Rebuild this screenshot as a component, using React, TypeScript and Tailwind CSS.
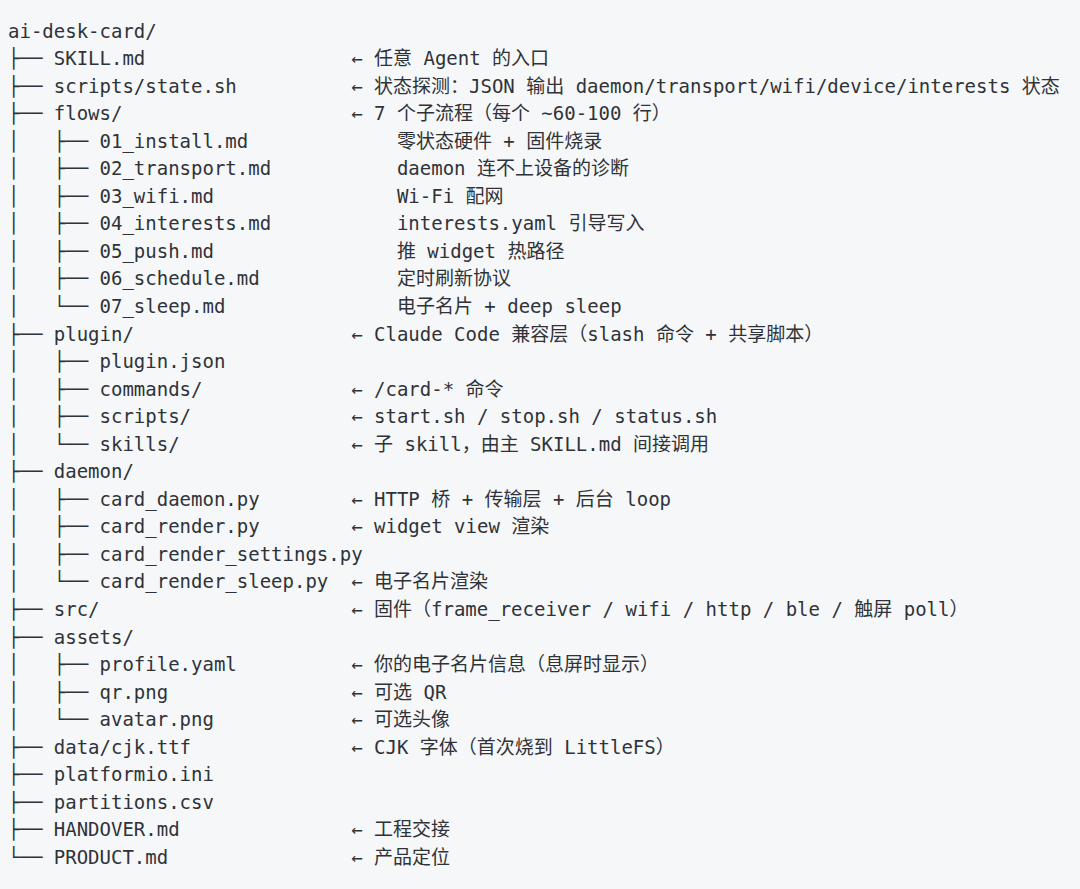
import React from 'react';

type Row = {
  path: string;
  note?: string;
  // arrow: "← note" after the path column, plain: indented note with no arrow
  kind?: 'arrow' | 'plain';
};

const rows: Row[] = [
  { path: 'ai-desk-card/' },
  { path: '├── SKILL.md', note: '任意 Agent 的入口', kind: 'arrow' },
  { path: '├── scripts/state.sh', note: '状态探测：JSON 输出 daemon/transport/wifi/device/interests 状态', kind: 'arrow' },
  { path: '├── flows/', note: '7 个子流程（每个 ~60-100 行）', kind: 'arrow' },
  { path: '│   ├── 01_install.md', note: '零状态硬件 + 固件烧录', kind: 'plain' },
  { path: '│   ├── 02_transport.md', note: 'daemon 连不上设备的诊断', kind: 'plain' },
  { path: '│   ├── 03_wifi.md', note: 'Wi-Fi 配网', kind: 'plain' },
  { path: '│   ├── 04_interests.md', note: 'interests.yaml 引导写入', kind: 'plain' },
  { path: '│   ├── 05_push.md', note: '推 widget 热路径', kind: 'plain' },
  { path: '│   ├── 06_schedule.md', note: '定时刷新协议', kind: 'plain' },
  { path: '│   └── 07_sleep.md', note: '电子名片 + deep sleep', kind: 'plain' },
  { path: '├── plugin/', note: 'Claude Code 兼容层（slash 命令 + 共享脚本）', kind: 'arrow' },
  { path: '│   ├── plugin.json' },
  { path: '│   ├── commands/', note: '/card-* 命令', kind: 'arrow' },
  { path: '│   ├── scripts/', note: 'start.sh / stop.sh / status.sh', kind: 'arrow' },
  { path: '│   └── skills/', note: '子 skill，由主 SKILL.md 间接调用', kind: 'arrow' },
  { path: '├── daemon/' },
  { path: '│   ├── card_daemon.py', note: 'HTTP 桥 + 传输层 + 后台 loop', kind: 'arrow' },
  { path: '│   ├── card_render.py', note: 'widget view 渲染', kind: 'arrow' },
  { path: '│   ├── card_render_settings.py' },
  { path: '│   └── card_render_sleep.py', note: '电子名片渲染', kind: 'arrow' },
  { path: '├── src/', note: '固件（frame_receiver / wifi / http / ble / 触屏 poll）', kind: 'arrow' },
  { path: '├── assets/' },
  { path: '│   ├── profile.yaml', note: '你的电子名片信息（息屏时显示）', kind: 'arrow' },
  { path: '│   ├── qr.png', note: '可选 QR', kind: 'arrow' },
  { path: '│   └── avatar.png', note: '可选头像', kind: 'arrow' },
  { path: '├── data/cjk.ttf', note: 'CJK 字体（首次烧到 LittleFS）', kind: 'arrow' },
  { path: '├── platformio.ini' },
  { path: '├── partitions.csv' },
  { path: '├── HANDOVER.md', note: '工程交接', kind: 'arrow' },
  { path: '└── PRODUCT.md', note: '产品定位', kind: 'arrow' },
];

function TreeLine({ row }: { row: Row }) {
  return (
    <div className="flex h-[27.55px] items-center whitespace-pre">
      <span className="w-[30ch] shrink-0">{row.path}</span>
      {row.kind === 'arrow' && (
        <>
          <span className="w-[2ch] shrink-0">←</span>
          <span>{row.note}</span>
        </>
      )}
      {row.kind === 'plain' && <span className="pl-[4ch]">{row.note}</span>}
    </div>
  );
}

export default function App() {
  return (
    <div className="min-h-screen bg-[#f6f7f9] pl-2 pt-[17px] font-['DejaVu_Sans_Mono','Noto_Sans_CJK_SC',monospace] text-[19px] text-[#2f3338]">
      {rows.map((row, i) => (
        <TreeLine key={i} row={row} />
      ))}
    </div>
  );
}
